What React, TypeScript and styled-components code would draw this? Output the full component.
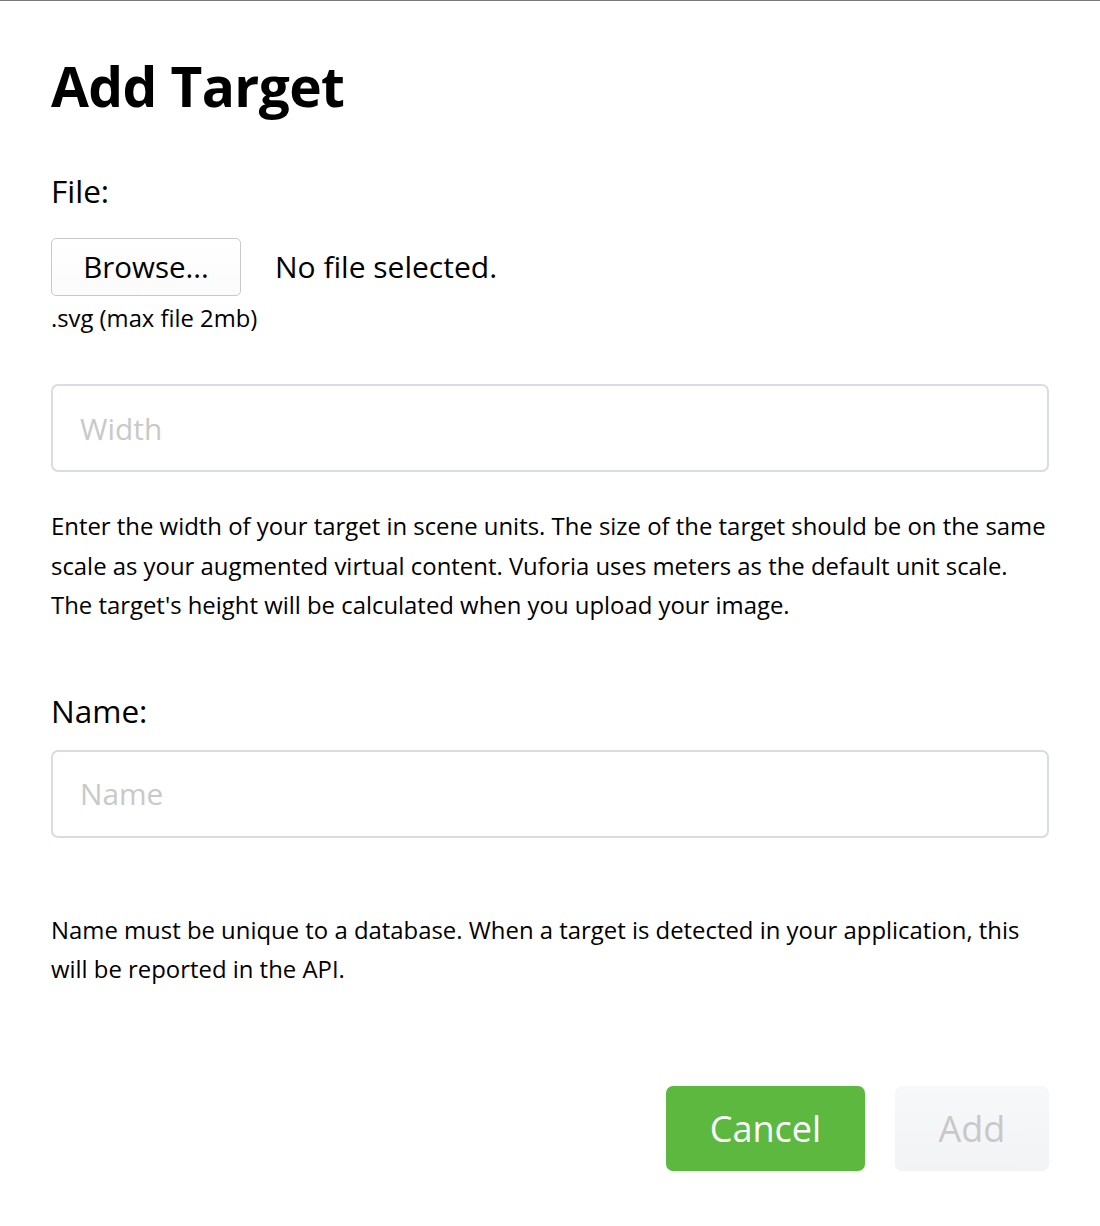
import styled, { createGlobalStyle } from "styled-components"

const GlobalStyle = createGlobalStyle`
  html, body {
    margin: 0;
    padding: 0;
    background: #ffffff;
  }
  body {
    font-family: "Open Sans", "Liberation Sans", sans-serif;
    color: #000000;
  }
`

const Dialog = styled.form`
  display: flex;
  flex-direction: column;
  min-height: 1226px;
  box-sizing: border-box;
  border-top: 1px solid #7b7b7b;
  padding: 47px 51px 0 51px;
`

const Title = styled.h1`
  margin: 0;
  font-size: 55px;
  line-height: 76px;
  font-weight: 700;
  letter-spacing: -0.6px;
`

const FieldLabel = styled.label<{ $top: number }>`
  display: block;
  margin-top: ${(p) => p.$top}px;
  font-size: 31.5px;
  line-height: 40px;
  font-weight: 400;
`

const FileRow = styled.div`
  display: flex;
  align-items: center;
  gap: 34px;
  margin-top: 27px;
`

const BrowseButton = styled.button`
  width: 190px;
  height: 58px;
  box-sizing: border-box;
  border: 1px solid #c9c9c9;
  border-radius: 5px;
  background: linear-gradient(#ffffff, #fbfbfb);
  font-family: inherit;
  font-size: 29.5px;
  color: #000;
  padding: 0 0 2px;
  cursor: pointer;
`

const FileStatus = styled.span`
  font-size: 30px;
  line-height: 40px;
`

const Hint = styled.div`
  margin-top: 7px;
  font-size: 23.8px;
  line-height: 30px;
`

const TextField = styled.input<{ $top: number }>`
  display: block;
  margin-top: ${(p) => p.$top}px;
  width: 100%;
  height: 88px;
  box-sizing: border-box;
  border: 2px solid #d9dce0;
  border-radius: 7px;
  padding: 0 27px;
  font-family: inherit;
  font-size: 29.8px;
  color: #000;
  outline: none;
  &::placeholder {
    color: #c9c9c9;
  }
`

const Help = styled.p<{ $top: number }>`
  margin: ${(p) => p.$top}px 0 0;
  font-size: 23.9px;
  line-height: 39.6px;
`

const Actions = styled.div`
  display: flex;
  justify-content: flex-end;
  gap: 30px;
  margin-top: 97px;
`

const ActionButton = styled.button<{ $primary?: boolean }>`
  height: 85px;
  width: ${(p) => (p.$primary ? 199 : 154)}px;
  border: none;
  border-radius: 7px;
  font-family: inherit;
  font-size: 36px;
  padding: 0;
  color: ${(p) => (p.$primary ? "#ffffff" : "#c8c8c8")};
  background: ${(p) =>
    p.$primary ? "#5cb83e" : "linear-gradient(#f7f8f9, #f2f3f4)"};
  cursor: ${(p) => (p.$primary ? "pointer" : "default")};
`

export default function App() {
  return (
    <>
      <GlobalStyle />
      <Dialog onSubmit={(e) => e.preventDefault()}>
        <Title>Add Target</Title>

        <FieldLabel $top={47}>File:</FieldLabel>
        <FileRow>
          <BrowseButton type="button">Browse...</BrowseButton>
          <FileStatus>No file selected.</FileStatus>
        </FileRow>
        <Hint>.svg (max file 2mb)</Hint>

        <TextField $top={51} placeholder="Width" />
        <Help $top={34}>
          Enter the width of your target in scene units. The size of the target
          should be on the same scale as your augmented virtual content. Vuforia
          uses meters as the default unit scale. The target's height will be
          calculated when you upload your image.
        </Help>

        <FieldLabel $top={66}>Name:</FieldLabel>
        <TextField $top={19} placeholder="Name" />
        <Help $top={72}>
          Name must be unique to a database. When a target is detected in your
          application, this will be reported in the API.
        </Help>

        <Actions>
          <ActionButton type="button" $primary>
            Cancel
          </ActionButton>
          <ActionButton type="button" disabled>
            Add
          </ActionButton>
        </Actions>
      </Dialog>
    </>
  )
}
